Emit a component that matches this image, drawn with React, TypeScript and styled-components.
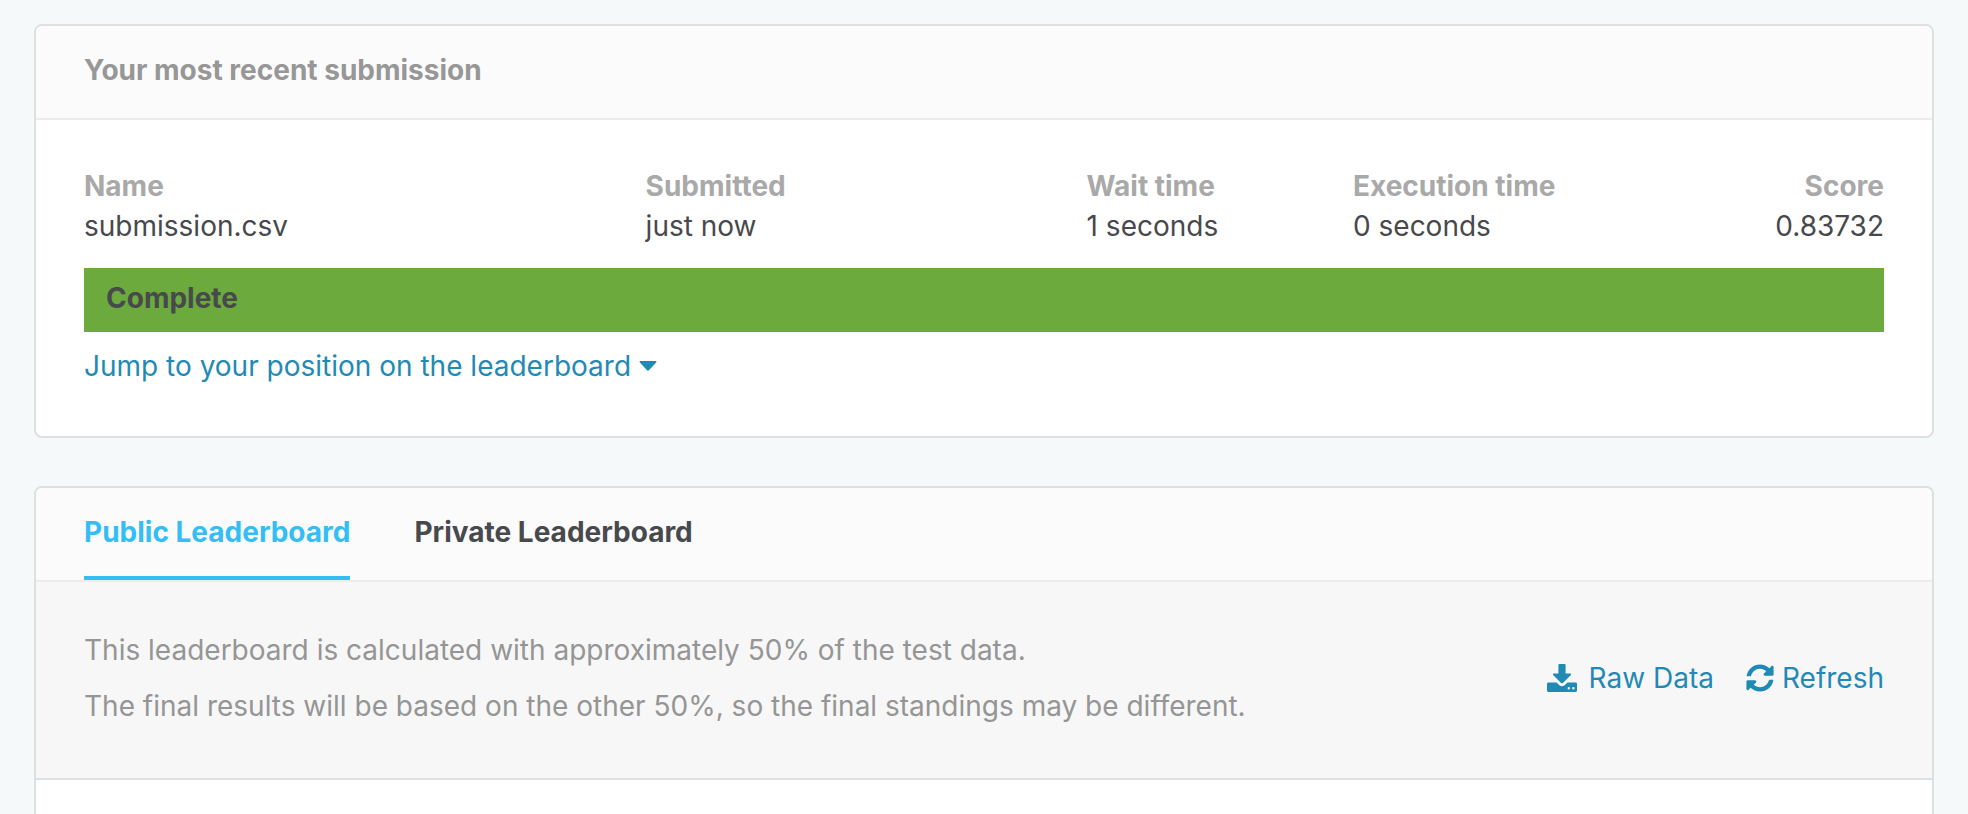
import React from 'react';
import styled, { createGlobalStyle } from 'styled-components';

const GlobalStyle = createGlobalStyle`
  *, *::before, *::after { box-sizing: border-box; }
  body {
    margin: 0;
    background: #f5f9fa;
    color: #47494d;
    font: 400 28px/40px Inter, Roboto, sans-serif;
  }
`;

const Page = styled.main`
  display: flex;
  flex-direction: column;
  gap: 48px;
  min-height: 100vh;
  padding: 24px 34px 0;
`;

const Card = styled.section<{ $open?: boolean }>`
  border: 2px solid #dedfe0;
  border-bottom-width: ${p => (p.$open ? 0 : 2)}px;
  border-radius: ${p => (p.$open ? '8px 8px 0 0' : '8px')};
  background: #fff;
  overflow: hidden;
  flex-grow: ${p => (p.$open ? 1 : 0)};
`;

const CardHeader = styled.header`
  padding: 24px 48px 28px;
  border-bottom: 2px solid #ececec;
  background: #fbfbfb;
`;

const Title = styled.h2`
  margin: 0;
  color: #979797;
  font-size: 28px;
  font-weight: 700;
`;

const CardBody = styled.div`
  padding: 46px 48px 50px;
`;

const Details = styled.table`
  width: 100%;
  table-layout: fixed;
  border-collapse: collapse;
`;

const Label = styled.th<{ $width?: string; $end?: boolean }>`
  width: ${p => p.$width ?? 'auto'};
  padding: 0;
  color: #a9a9a9;
  font-weight: 700;
  text-align: ${p => (p.$end ? 'right' : 'left')};
`;

const Value = styled.td<{ $end?: boolean }>`
  padding: 0;
  text-align: ${p => (p.$end ? 'right' : 'left')};
`;

const StatusBar = styled.div`
  margin: 22px 0 14px;
  padding: 10px 22px 14px;
  background: #6caa3d;
  font-weight: 700;
`;

const Link = styled.a`
  display: inline-flex;
  align-items: center;
  gap: 8px;
  color: #1f8ab5;
  text-decoration: none;
`;

const Tabs = styled.nav`
  display: flex;
  gap: 64px;
  padding: 0 48px;
  border-bottom: 2px solid #ececec;
  background: #fbfbfb;
`;

const Tab = styled.button<{ $active?: boolean }>`
  padding: 24px 0;
  border: 0;
  border-bottom: 4px solid ${p => (p.$active ? '#35bdf5' : 'transparent')};
  background: none;
  color: ${p => (p.$active ? '#35bdf5' : '#47494d')};
  font: inherit;
  font-weight: 700;
  cursor: pointer;
`;

const Info = styled.div`
  display: flex;
  align-items: center;
  justify-content: space-between;
  gap: 32px;
  padding: 40px 48px 44px;
  border-bottom: 2px solid #dedfe0;
  background: #f7f7f7;
`;

const Note = styled.p`
  margin: 0;
  color: #959595;
  line-height: 56px;
`;

const Actions = styled.div`
  display: flex;
  flex-shrink: 0;
  gap: 32px;
`;

const Caret = () => (
  <svg width="18" height="10" viewBox="0 0 18 10" aria-hidden="true">
    <path d="M1.5 0h15q1.5 .4 .6 1.6L10 9.2q-1 .9-2 0L.9 1.6Q0 .4 1.5 0z" fill="currentColor" />
  </svg>
);

const DownloadIcon = () => (
  <svg width="34" height="28" viewBox="0 0 34 28" aria-hidden="true">
    <path
      fill="currentColor"
      fillRule="evenodd"
      d="M12.6 0h4.8q1.2 0 1.2 1.2V9.4h4.6q1.5.2.7 1.5l-8 8q-.9.8-1.8 0l-8-8q-.8-1.3.7-1.5h4.6V1.2Q11.4 0 12.6 0zM1.4 18.4h8.1l2.9 2.8q2.6 2.3 5.2 0l2.9-2.8h8.1Q30 18.400 30 19.800v6.800Q30 28 28.600 28H1.400Q0 28 0 26.600v-6.800Q0 18.400 1.400 18.400zM21.800 23a1.200 1.200 0 1 0 .01 2.400a1.200 1.200 0 0 0 0-2.400zM26.400 23a1.200 1.200 0 1 0 .01 2.400a1.200 1.200 0 0 0 0-2.400z"
    />
  </svg>
);

const RefreshIcon = () => (
  <svg width="28" height="28" viewBox="0 0 512 512" aria-hidden="true">
    <path
      fill="currentColor"
      d="M370.720 133.280C339.458 104.008 298.888 87.962 255.848 88c-77.458.068-144.328 53.178-162.791 126.850-1.344 5.363-6.122 9.150-11.651 9.150H24.103c-7.498 0-13.194-6.807-11.807-14.176C33.933 94.924 134.813 8 256 8c66.448 0 126.791 26.136 171.315 68.685L463.030 40.970C478.149 25.851 504 36.559 504 57.941V192c0 13.255-10.745 24-24 24H345.941c-21.382 0-32.090-25.851-16.971-40.971l41.750-41.749zM32 296h134.059c21.382 0 32.090 25.851 16.971 40.971l-41.750 41.750c31.262 29.273 71.835 45.319 114.876 45.280 77.418-.070 144.315-53.144 162.787-126.849 1.344-5.363 6.122-9.150 11.651-9.150h57.304c7.498 0 13.194 6.807 11.807 14.176C478.067 417.076 377.187 504 256 504c-66.448 0-126.791-26.136-171.315-68.685L48.970 471.030C33.851 486.149 8 475.441 8 454.059V320c0-13.255 10.745-24 24-24z"
    />
  </svg>
);

export default function App() {
  return (
    <>
      <GlobalStyle />
      <Page>
        <Card>
          <CardHeader>
            <Title>Your most recent submission</Title>
          </CardHeader>
          <CardBody>
            <Details>
              <thead>
                <tr>
                  <Label scope="col" $width="31.2%">Name</Label>
                  <Label scope="col" $width="24.5%">Submitted</Label>
                  <Label scope="col" $width="14.8%">Wait time</Label>
                  <Label scope="col">Execution time</Label>
                  <Label scope="col" $end>Score</Label>
                </tr>
              </thead>
              <tbody>
                <tr>
                  <Value>submission.csv</Value>
                  <Value>just now</Value>
                  <Value>1 seconds</Value>
                  <Value>0 seconds</Value>
                  <Value $end>0.83732</Value>
                </tr>
              </tbody>
            </Details>
            <StatusBar role="status">Complete</StatusBar>
            <Link href="#leaderboard">
              Jump to your position on the leaderboard
              <Caret />
            </Link>
          </CardBody>
        </Card>

        <Card $open id="leaderboard">
          <Tabs>
            <Tab type="button" $active aria-current="true">Public Leaderboard</Tab>
            <Tab type="button">Private Leaderboard</Tab>
          </Tabs>
          <Info>
            <div>
              <Note>This leaderboard is calculated with approximately 50% of the test data.</Note>
              <Note>The final results will be based on the other 50%, so the final standings may be different.</Note>
            </div>
            <Actions>
              <Link href="#raw-data">
                <DownloadIcon />
                Raw Data
              </Link>
              <Link href="#refresh">
                <RefreshIcon />
                Refresh
              </Link>
            </Actions>
          </Info>
        </Card>
      </Page>
    </>
  );
}
